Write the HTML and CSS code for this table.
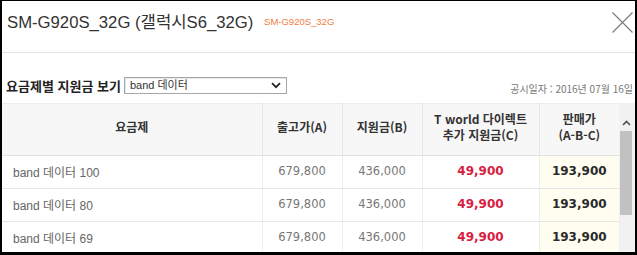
FILE: index.html
```html
<!DOCTYPE html>
<html lang="ko">
<head>
<meta charset="utf-8">
<title>SM-G920S_32G</title>
<link rel="stylesheet" href="styles.css">
</head>
<body>
<div class="modal">
  <header class="head">
    <h1 class="title">SM-G920S_32G (갤럭시S6_32G) <span class="code">SM-G920S_32G</span></h1>
    <button class="close" type="button" aria-label="닫기">
      <svg width="21" height="21" viewBox="0 0 21 21"><path d="M0.5 0.5 L20.5 20.5 M20.5 0.5 L0.5 20.5" stroke="#7a7a7a" stroke-width="1.1" fill="none"/></svg>
    </button>
  </header>
  <div class="filter">
    <span class="filter-label">요금제별 지원금 보기</span>
    <div class="select">
      <span class="select-text">band 데이터</span>
      <svg class="select-arrow" width="10" height="7" viewBox="0 0 10 7"><path d="M1 1.2 L5 5.2 L9 1.2" stroke="#222" stroke-width="1.7" fill="none"/></svg>
    </div>
    <span class="date">공시일자 : 2016년 07월 16일</span>
  </div>
  <div class="table-wrap">
    <table class="plans">
      <colgroup>
        <col class="c-plan"><col class="c-a"><col class="c-b"><col class="c-c"><col class="c-d">
      </colgroup>
      <thead>
        <tr>
          <th>요금제</th>
          <th>출고가(A)</th>
          <th>지원금(B)</th>
          <th><span class="hl">T world 다이렉트</span><span class="hl">추가 지원금(C)</span></th>
          <th><span class="hl">판매가</span><span class="hl">(A-B-C)</span></th>
        </tr>
      </thead>
      <tbody>
        <tr><td class="name">band 데이터 100</td><td class="num">679,800</td><td class="num">436,000</td><td class="extra">49,900</td><td class="price">193,900</td></tr>
        <tr><td class="name">band 데이터 80</td><td class="num">679,800</td><td class="num">436,000</td><td class="extra">49,900</td><td class="price">193,900</td></tr>
        <tr><td class="name">band 데이터 69</td><td class="num">679,800</td><td class="num">436,000</td><td class="extra">49,900</td><td class="price">193,900</td></tr>
      </tbody>
    </table>
    <div class="scrollbar">
      <div class="scroll-btn">
        <svg width="9" height="6" viewBox="0 0 9 6"><path d="M1 5 L4.5 1.5 L8 5" stroke="#505050" stroke-width="1.6" fill="none"/></svg>
      </div>
      <div class="scroll-thumb"></div>
    </div>
  </div>
</div>
</body>
</html>
```
FILE: styles.css
```css
* { box-sizing: border-box; }
html, body { margin: 0; padding: 0; background: #fff; }
body { font-family: "Liberation Sans", "Noto Sans CJK KR", sans-serif; color: #333; }

.modal {
  width: 637px;
  height: 255px;
  border-style: solid;
  border-color: #000;
  border-width: 1px 2px 3px 2px;
  background: #fff;
  overflow: hidden;
  display: flex;
  flex-direction: column;
}

.head {
  height: 52px;
  flex: none;
  display: flex;
  align-items: flex-start;
  padding: 10px 2px 0 5px;
  border-bottom: 1px solid #e4e4e4;
}
.title {
  margin: 0;
  display: flex;
  align-items: center;
  font-weight: normal;
  font-size: 16.7px;
  line-height: 24px;
  color: #333;
  white-space: pre;
}
.code {
  font-size: 9.5px;
  color: #ef7b3e;
  margin-left: 6px;
  margin-top: -3px;
}
.close {
  margin-left: auto;
  margin-top: 1px;
  padding: 0;
  border: 0;
  background: none;
  width: 21px;
  height: 21px;
  display: block;
}
.close svg { display: block; }

.filter {
  flex: none;
  display: flex;
  align-items: center;
  padding: 24px 2px 0 4px;
}
.filter-label {
  font-family: "Noto Sans CJK KR", sans-serif;
  font-weight: bold;
  font-size: 13px;
  line-height: 17px;
  color: #222;
}
.select {
  margin-left: 3px;
  width: 163px;
  height: 17px;
  border: 1px solid #a7a7a7;
  box-shadow: inset 1px 1px 0 #e8e8e8;
  display: flex;
  align-items: center;
  padding: 0 5px 0 5px;
  background: #fff;
}
.select-text {
  font-size: 11px;
  line-height: 13px;
  color: #333;
}
.select-arrow { margin-left: auto; display: block; }
.date {
  margin-left: auto;
  align-self: flex-end;
  font-family: "Noto Sans CJK KR", sans-serif;
  font-size: 10px;
  line-height: 14px;
  color: #777;
  margin-bottom: -2px;
}

.table-wrap {
  margin-top: 9px;
  flex: 1;
  min-height: 0;
  display: flex;
  overflow: hidden;
}
.plans {
  width: 617px;
  flex: none;
  table-layout: fixed;
  border-collapse: collapse;
  align-self: flex-start;
}
.c-plan { width: 260px; }
.c-a { width: 80px; }
.c-b { width: 80px; }
.c-c { width: 117px; }
.c-d { width: 80px; }

.plans th {
  height: 52px;
  background: #f7f7f7;
  border-top: 1px solid #ececec;
  border-bottom: 1px solid #e2e2e2;
  border-right: 1px solid #e6e6e6;
  font-family: "Noto Sans CJK KR", sans-serif;
  font-weight: bold;
  font-size: 12px;
  line-height: 18px;
  color: #333;
  text-align: center;
  vertical-align: middle;
  padding: 0 0 5px 0;
}
.plans th .hl { display: block; height: 16px; line-height: 16px; }
.plans th:last-child { border-right: 0; }
.plans td {
  height: 33px;
  border-bottom: 1px solid #e6e6e6;
  border-right: 1px solid #eeeeee;
  padding: 0 0 2px 0;
  text-align: center;
  vertical-align: middle;
}
.plans td:last-child { border-right: 0; }
.plans td.name {
  text-align: left;
  padding-left: 11px;
  font-family: "Liberation Sans", "Noto Sans CJK KR", sans-serif;
  font-size: 12px;
  color: #666;
}
.plans td.num {
  font-family: "DejaVu Sans", sans-serif;
  font-size: 11.5px;
  color: #777;
}
.plans td.extra {
  font-family: "DejaVu Sans", sans-serif;
  font-weight: bold;
  font-size: 12px;
  color: #d7203f;
}
.plans td.price {
  font-family: "DejaVu Sans", sans-serif;
  font-weight: bold;
  font-size: 12px;
  color: #2a2a2a;
  background: #fffcf0;
}

.scrollbar {
  flex: 1;
  background: #f1f1f1;
  display: flex;
  flex-direction: column;
  align-items: flex-start;
}
.scroll-btn {
  height: 28px;
  width: 14px;
  display: flex;
  align-items: flex-end;
  justify-content: center;
  padding-bottom: 5px;
}
.scroll-btn svg { display: block; }
.scroll-thumb {
  margin-left: 1px;
  width: 12px;
  height: 84px;
  background: #c1c1c1;
}
```
